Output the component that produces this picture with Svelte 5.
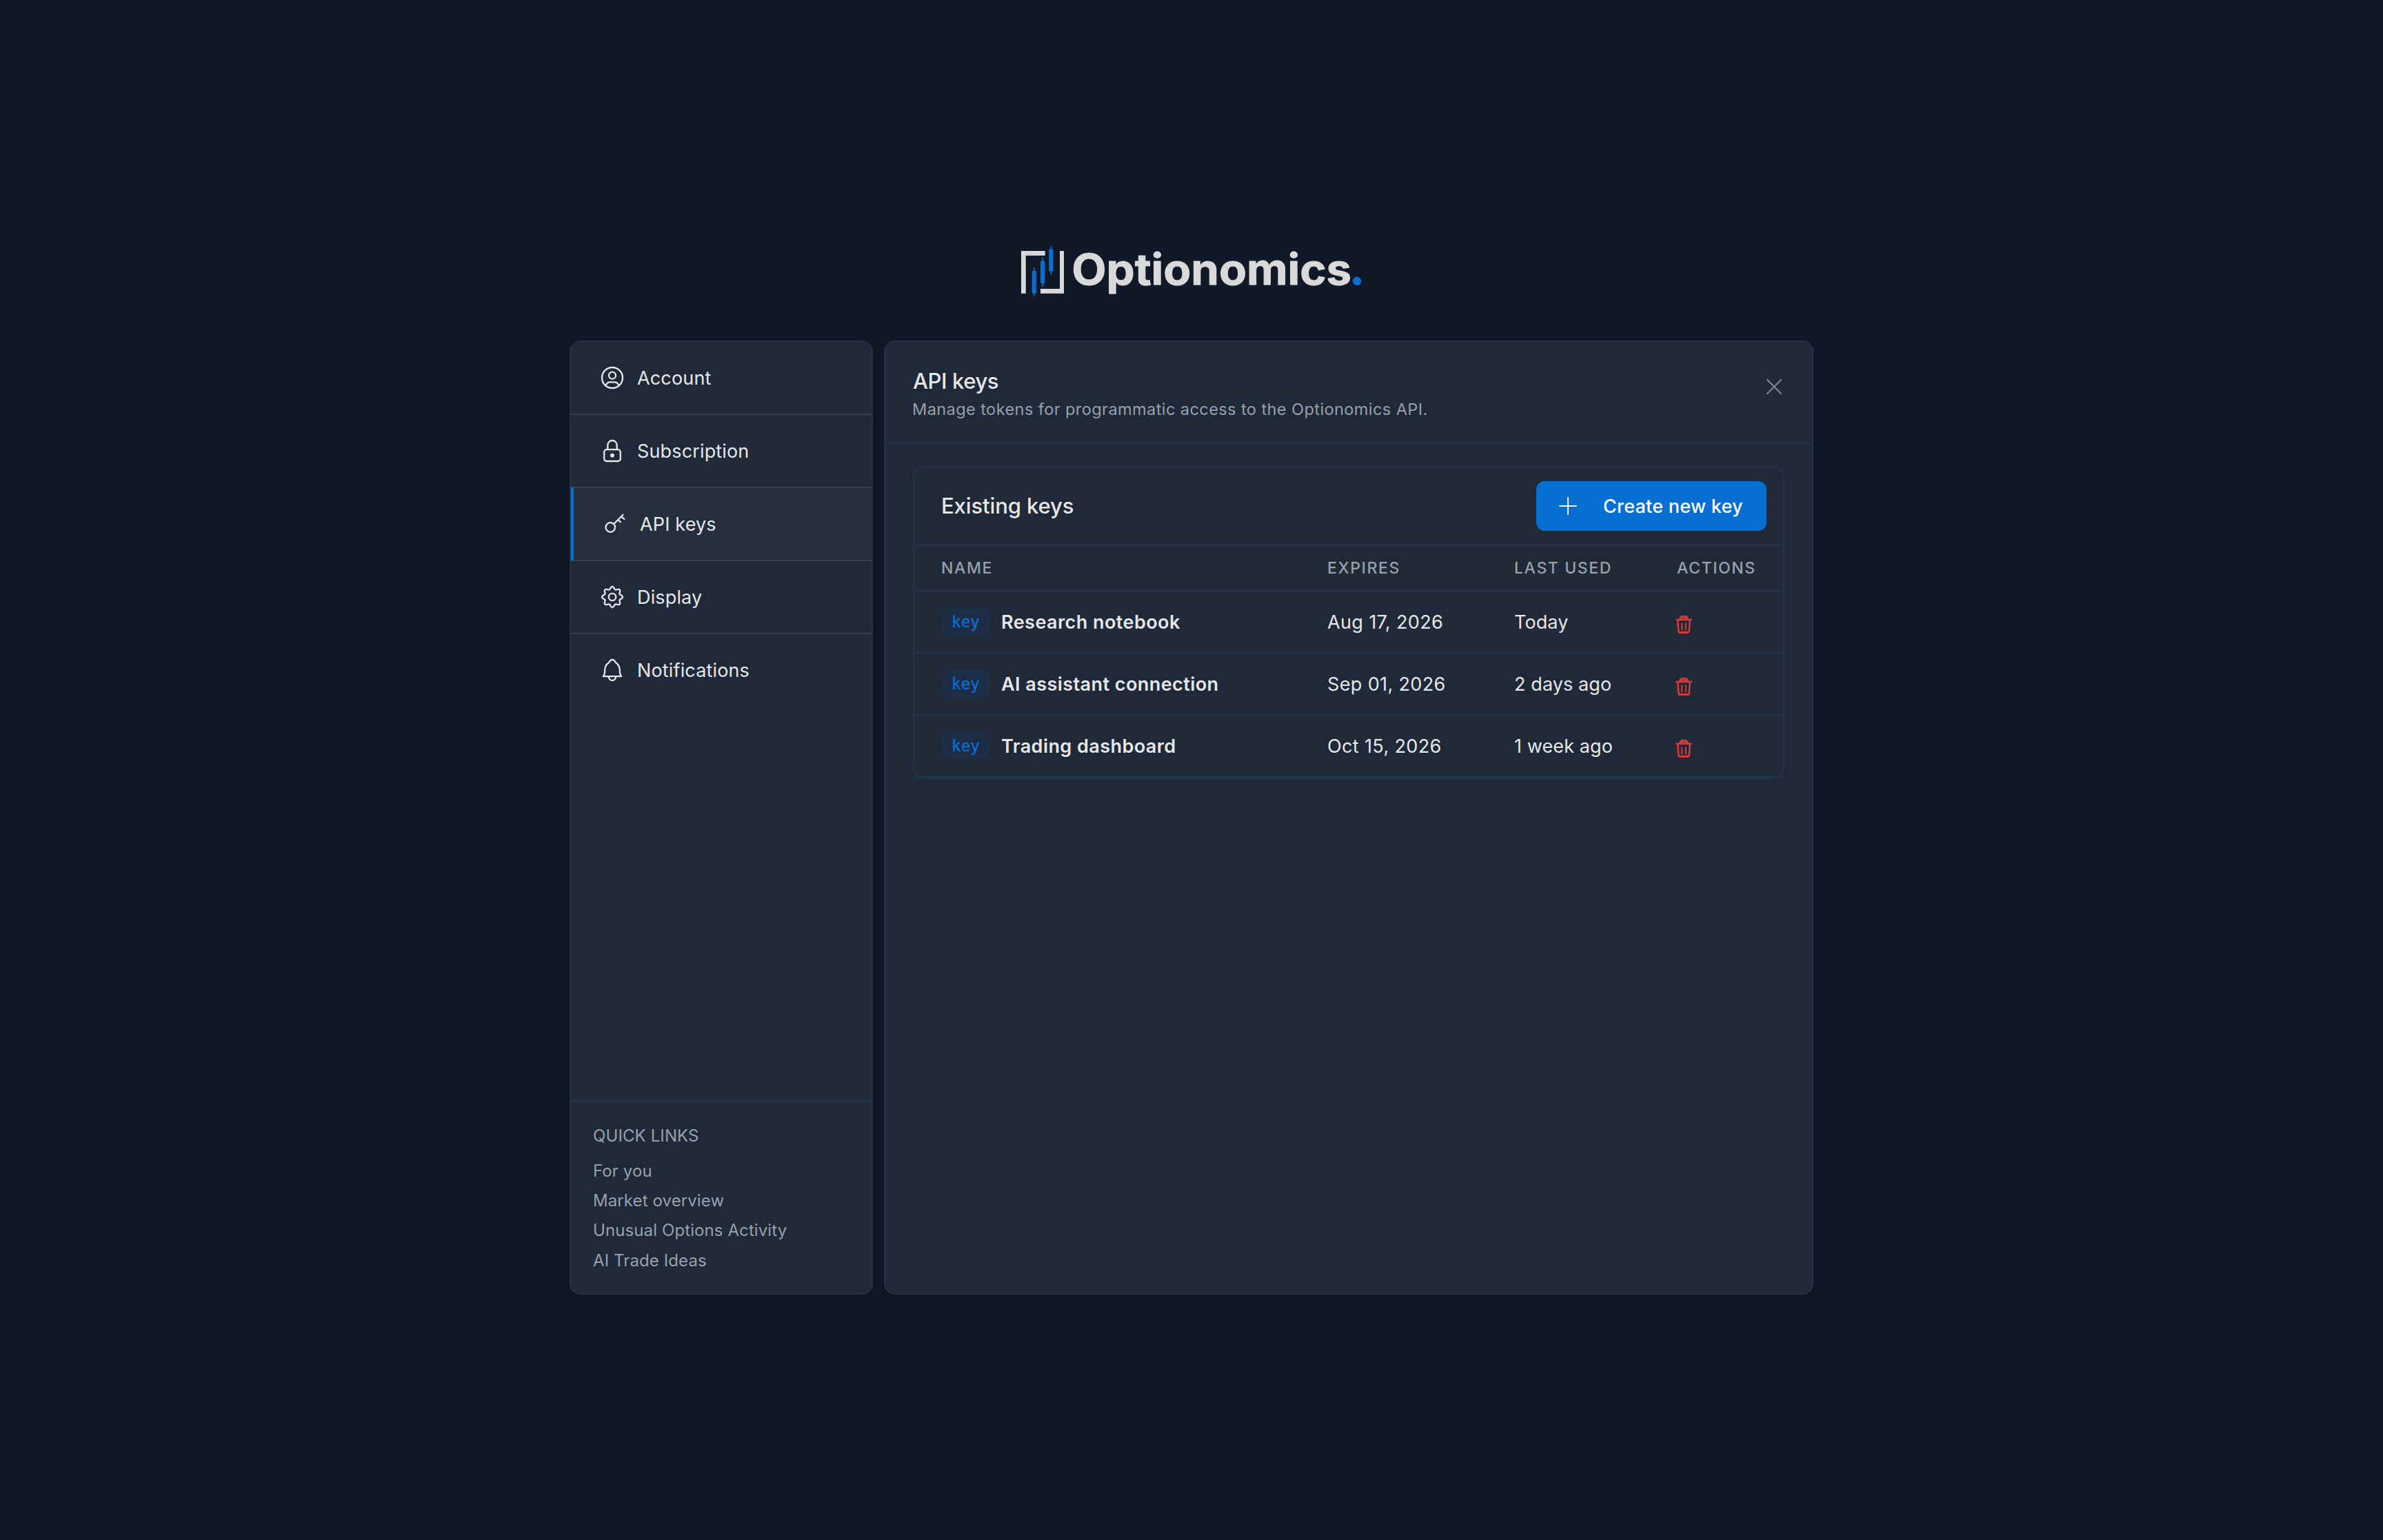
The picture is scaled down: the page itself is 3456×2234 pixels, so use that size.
<script>
	const navItems = [
		{ id: 'account', label: 'Account' },
		{ id: 'subscription', label: 'Subscription' },
		{ id: 'api-keys', label: 'API keys' },
		{ id: 'display', label: 'Display' },
		{ id: 'notifications', label: 'Notifications' }
	];

	const quickLinks = ['For you', 'Market overview', 'Unusual Options Activity', 'AI Trade Ideas'];

	let active = 'api-keys';

	let keys = [
		{ name: 'Research notebook', expires: 'Aug 17, 2026', lastUsed: 'Today' },
		{ name: 'AI assistant connection', expires: 'Sep 01, 2026', lastUsed: '2 days ago' },
		{ name: 'Trading dashboard', expires: 'Oct 15, 2026', lastUsed: '1 week ago' }
	];

	// eight rounded teeth around the centre of a 32px box
	function gearPath() {
		let d = '';
		for (let i = 0; i < 128; i++) {
			const a = (i / 128) * Math.PI * 2;
			const r = 13.2 + 1.8 * Math.cos(8 * a);
			d += `${i ? 'L' : 'M'}${(16 + r * Math.cos(a)).toFixed(2)} ${(16 + r * Math.sin(a)).toFixed(2)}`;
		}
		return d + 'Z';
	}

	function removeKey(key) {
		keys = keys.filter((k) => k !== key);
	}
</script>

<div class="page">
	<svg class="logo" viewBox="0 0 496 90" role="img" aria-label="Optionomics">
		<g class="frame">
			<path d="M1 14h34.7v6.7H7.7v55H1z" />
			<path d="M57 14h6v61.7H29V69h28z" />
		</g>
		<g class="blue">
			<rect x="16.7" y="43" width="6.2" height="32.7" rx="1" />
			<rect x="18.9" y="38.3" width="1.8" height="41.5" />
			<rect x="29" y="28.7" width="6.2" height="32" rx="1" />
			<rect x="31.2" y="24" width="1.8" height="41.7" />
			<rect x="41.2" y="11.6" width="6.2" height="32" rx="1" />
			<rect x="43.4" y="7" width="1.8" height="41.2" />
			<circle cx="488" cy="57.8" r="6.2" />
		</g>
		<text x="74.2" y="63.4" textLength="406" lengthAdjust="spacingAndGlyphs">Optionomics</text>
	</svg>

	<div class="layout">
		<aside class="panel sidebar">
			<nav>
				{#each navItems as item}
					<button class="nav-item" class:active={active === item.id} on:click={() => (active = item.id)}>
						<svg class="nav-icon" viewBox="0 0 32 32">
							{#if item.id === 'account'}
								<circle cx="16" cy="16" r="15" />
								<circle cx="16" cy="12.7" r="5" />
								<path d="M6.6 26.6c1.6-2.800 3.400-4.200 5.600-4.200h7.600c2.200 0 4 1.400 5.600 4.200" />
							{:else if item.id === 'subscription'}
								<rect x="4.200" y="14.200" width="23.600" height="16.800" rx="3.600" />
								<path d="M9.300 14V8a6.700 7 0 0 1 13.400 0v6" />
								<circle class="solid" cx="16" cy="22.700" r="2.900" />
							{:else if item.id === 'api-keys'}
								<circle cx="9.300" cy="21" r="6.800" />
								<path d="M14.300 16L27.500 2.800M25 5.300l4.300 3.600M20.300 10l3.600 3.300" />
							{:else if item.id === 'display'}
								<path d={gearPath()} />
								<circle cx="16" cy="16" r="5.200" />
							{:else}
								<path d="M2.800 25.200h26.400c-1.700-1.600-2.200-2.800-2.200-5.700 0-7-1-11.300-6.200-14.500C19.500 2.200 18.200 1 16 1s-3.500 1.200-4.800 4C6 8.200 5 12.500 5 19.500c0 2.900-.5 4.100-2.200 5.700z" />
								<path d="M10.800 25.500a5.200 5.600 0 0 0 10.400 0" />
							{/if}
						</svg>
						<span>{item.label}</span>
					</button>
				{/each}
			</nav>

			<div class="quick-links">
				<h4>QUICK LINKS</h4>
				{#each quickLinks as link}
					<a href="#top">{link}</a>
				{/each}
			</div>
		</aside>

		<main class="panel content">
			<header class="content-header">
				<div>
					<h2>API keys</h2>
					<p>Manage tokens for programmatic access to the Optionomics API.</p>
				</div>
				<button class="close" aria-label="Close">
					<svg viewBox="0 0 22 22"><path d="M1 1l20 20M21 1L1 21" /></svg>
				</button>
			</header>

			<section class="card">
				<div class="card-header">
					<h3>Existing keys</h3>
					<button class="create">
						<svg viewBox="0 0 26 26"><path d="M13 1v24M1 13h24" /></svg>
						<span>Create new key</span>
					</button>
				</div>

				<div class="row head">
					<span>NAME</span>
					<span>EXPIRES</span>
					<span>LAST USED</span>
					<span>ACTIONS</span>
				</div>
				{#each keys as key}
					<div class="row">
						<div class="name">
							<code>key</code>
							<strong>{key.name}</strong>
						</div>
						<span class="date">{key.expires}</span>
						<span>{key.lastUsed}</span>
						<button class="delete" aria-label="Delete key" on:click={() => removeKey(key)}>
							<svg viewBox="0 0 24 28">
								<path d="M1.200 7h21.600" />
								<path d="M5.500 6.500L8.300 2.300h7.400l2.800 4.200" />
								<path d="M8.600 6.500V4.600h6.800v1.900" class="thin" />
								<path d="M3.200 7.500l1 15.500c.1 1.800 1 2.800 2.800 2.800h10c1.800 0 2.700-1 2.800-2.800l1-15.500" />
								<path d="M5.500 24.600c1.500.9 11.500.9 13 0" />
								<path d="M9.200 12.200v9.500M14.800 12.200v9.500" class="thin" />
							</svg>
						</button>
					</div>
				{/each}
			</section>
		</main>
	</div>
</div>

<style>
	:global(body) {
		background: #111827;
	}
	.page {
		--surface: #1f2937;
		--border: #243446;
		--blue: #066fd1;
		--text: #e5e7eb;
		--muted: #98a0ac;
		box-sizing: border-box;
		height: 2234px;
		padding-top: 350px;
		display: flex;
		flex-direction: column;
		align-items: center;
		font-family: Inter, 'Liberation Sans', sans-serif;
		font-size: 27px;
		color: var(--text);
	}
	.page * {
		box-sizing: border-box;
	}
	h2, h3, h4, p {
		margin: 0;
	}
	button {
		padding: 0;
		border: 0;
		background: none;
		font: inherit;
		color: inherit;
		cursor: pointer;
	}
	svg {
		display: block;
		flex: none;
		fill: none;
		stroke: currentColor;
		stroke-width: 2;
		stroke-linecap: round;
		stroke-linejoin: round;
	}

	.logo {
		width: 496px;
		height: 90px;
		margin-bottom: 54px;
		stroke: none;
	}
	.frame, .logo text {
		fill: #d9d9d9;
	}
	.logo text {
		font-size: 61.5px;
		font-weight: 700;
		stroke: #d9d9d9;
		stroke-width: 0.9;
	}
	.blue {
		fill: var(--blue);
	}

	.layout {
		display: grid;
		grid-template-columns: 440px 1348px;
		gap: 16px;
		height: 1384px;
	}
	.panel {
		background: var(--surface);
		border: 2px solid var(--border);
		border-radius: 16px;
		box-shadow: 0 4px 10px rgba(0, 0, 0, 0.16);
	}

	.sidebar {
		display: flex;
		flex-direction: column;
		justify-content: space-between;
	}
	nav {
		display: flex;
		flex-direction: column;
	}
	.nav-item {
		display: flex;
		align-items: center;
		gap: 20px;
		height: 106px;
		padding-left: 44px;
		border-bottom: 2px solid #374151;
		letter-spacing: 0.15px;
	}
	.nav-item:last-child {
		height: 104px;
		border-bottom: 0;
	}
	.nav-item.active {
		height: 108px;
		margin-top: -2px;
		border-top: 2px solid #374151;
		border-left: 4px solid var(--blue);
		background: #252e3c;
	}
	.nav-icon {
		width: 32px;
		height: 32px;
		overflow: visible;
		stroke-width: 2.3;
	}
	.nav-icon .solid {
		fill: currentColor;
		stroke: none;
	}

	.quick-links {
		display: flex;
		flex-direction: column;
		padding: 32px 32px 26px;
		border-top: 4px solid var(--border);
		font-size: 24px;
		letter-spacing: 0.1px;
		color: var(--muted);
	}
	.quick-links h4 {
		margin-bottom: 12px;
		font-size: 24px;
		font-weight: 400;
		line-height: 34px;
	}
	.quick-links a {
		line-height: 43.3px;
		color: inherit;
		text-decoration: none;
	}

	.content-header {
		display: flex;
		justify-content: space-between;
		align-items: flex-start;
		height: 148px;
		padding: 35px 44px 0 40px;
		border-bottom: 2px solid var(--border);
	}
	h2, h3 {
		font-size: 31px;
		font-weight: 500;
		line-height: 44px;
	}
	h2 {
		letter-spacing: -0.4px;
	}
	.content-header p {
		margin-left: -1px;
		font-size: 23.5px;
		line-height: 37px;
		letter-spacing: 0.43px;
		color: var(--muted);
	}
	.close {
		margin-top: 19px;
		color: #7b838e;
	}
	.close svg {
		width: 22px;
		height: 22px;
		stroke-width: 2.3;
	}

	.card {
		margin: 32px 40px;
		border: 2px solid var(--border);
		border-radius: 16px;
	}
	.card-header {
		display: flex;
		justify-content: space-between;
		align-items: center;
		height: 114px;
		padding: 0 24px 0 39px;
		border-bottom: 2px solid var(--border);
	}
	.card-header h3 {
		letter-spacing: -0.1px;
	}
	.create {
		display: flex;
		align-items: center;
		gap: 38px;
		width: 334px;
		height: 72px;
		padding-left: 33px;
		border-radius: 12px;
		background: var(--blue);
		color: #fff;
		font-weight: 500;
		letter-spacing: 0.22px;
		white-space: nowrap;
	}
	.create svg {
		width: 26px;
		height: 26px;
	}

	.row {
		display: grid;
		grid-template-columns: 560px 271px 236px 1fr;
		align-items: center;
		height: 90px;
		padding-left: 39px;
		border-bottom: 2px solid var(--border);
		letter-spacing: 0.1px;
	}
	.row.head {
		height: 66px;
		font-size: 23px;
		font-weight: 500;
		letter-spacing: 1.6px;
		color: var(--muted);
	}
	.name {
		display: flex;
		align-items: center;
		gap: 16px;
		padding-left: 1px;
	}
	.name strong {
		font-weight: 600;
		letter-spacing: 0.44px;
	}
	.date {
		letter-spacing: 0.37px;
	}
	code {
		width: 70px;
		height: 40px;
		padding-right: 1px;
		border-radius: 12px;
		background: #1d2d45;
		color: var(--blue);
		font-family: 'DejaVu Sans Mono', monospace;
		font-size: 22.5px;
		line-height: 40px;
		text-align: center;
		-webkit-text-stroke: 0.4px var(--blue);
	}
	.delete {
		justify-self: start;
		margin: 8px 0 0 -2px;
		color: #d63939;
	}
	.delete svg {
		width: 24px;
		height: 28px;
		stroke-width: 2.6;
	}
	.delete .thin {
		stroke-width: 2;
	}
</style>
